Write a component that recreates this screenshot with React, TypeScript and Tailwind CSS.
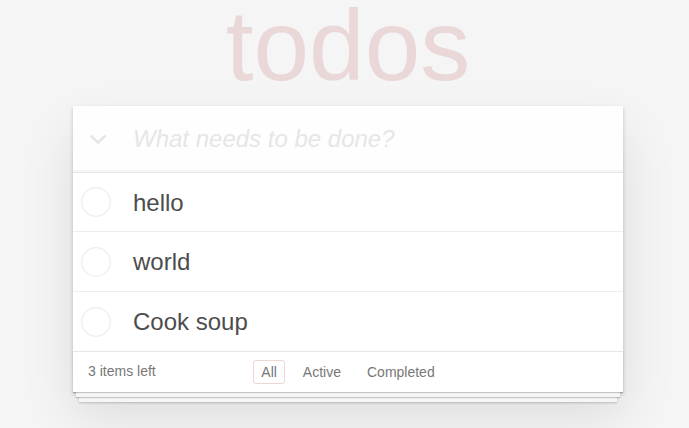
import { useState } from 'react'

type Todo = { id: number; title: string; completed: boolean }

const initialTodos: Todo[] = [
    { id: 1, title: 'hello', completed: false },
    { id: 2, title: 'world', completed: false },
    { id: 3, title: 'Cook soup', completed: false },
]

const filters = ['All', 'Active', 'Completed']

function App() {
    const [todos] = useState<Todo[]>(initialTodos)
    const [filter, setFilter] = useState('All')
    const left = todos.filter(t => !t.completed).length

    return (
        <main className="min-h-screen bg-[#f5f5f5] text-[#4d4d4d] font-['Liberation_Sans',Arial,sans-serif]">
            <div className="ml-[73px] w-[550px] pt-px">
                <h1 className="-mt-[5.6px] mb-[10.6px] text-center text-[100px] leading-[100px] font-thin text-[rgba(175,47,47,0.15)]">
                    todos
                </h1>

                <section className="bg-white shadow-[0_2px_4px_0_rgba(0,0,0,0.2),0_25px_50px_0_rgba(0,0,0,0.1)]">
                    <header className="flex h-[65.6px] items-center bg-[rgba(0,0,0,0.003)] shadow-[inset_0_-2px_1px_rgba(0,0,0,0.03)]">
                        <div className="flex w-[60px] items-center justify-start pl-[16px]">
                            <svg width="18" height="10" viewBox="0 0 18 10" className="mt-[1px]">
                                <polyline points="1.5,1.5 9,8.5 16.5,1.5" fill="none" stroke="#e6e6e6" strokeWidth="2.6" />
                            </svg>
                        </div>
                        <input
                            className="flex-1 bg-transparent pr-4 text-[24px] leading-[33.6px] outline-none placeholder:italic placeholder:text-[#e6e6e6]"
                            placeholder="What needs to be done?"
                        />
                    </header>

                    <ul className="border-t border-[#e6e6e6]">
                        {todos.map((todo, i) => (
                            <li
                                key={todo.id}
                                className={`flex items-center ${i === todos.length - 1 ? 'h-[58.8px]' : 'h-[59.8px] border-b border-[#ededed]'}`}
                            >
                                <div className="flex w-[60px] items-center pl-[8px]">
                                    <svg width="30" height="30" viewBox="0 0 30 30">
                                        <circle cx="15" cy="15" r="14.3" fill="none" stroke="#ededed" strokeWidth="1.2" />
                                    </svg>
                                </div>
                                <label className="pt-px text-[24px] leading-[33.6px] text-[#4d4d4d]">{todo.title}</label>
                            </li>
                        ))}
                    </ul>

                    <footer className="grid h-[41px] grid-cols-[1fr_auto_1fr] items-center border-t border-[#e6e6e6] px-[15px] text-[14px] text-[#777] shadow-[0_1px_1px_rgba(0,0,0,0.2),0_8px_0_-3px_#f6f6f6,0_9px_1px_-3px_rgba(0,0,0,0.2),0_16px_0_-6px_#f6f6f6,0_17px_2px_-6px_rgba(0,0,0,0.2)]">
                        <span>{left} items left</span>
                        <ul className="flex gap-[10px]">
                            {filters.map(f => (
                                <li key={f}>
                                    <button
                                        onClick={() => setFilter(f)}
                                        className={`rounded-[3px] border px-[7px] py-[3px] leading-[16px] ${filter === f ? 'border-[rgba(175,47,47,0.2)]' : 'border-transparent'}`}
                                    >
                                        {f}
                                    </button>
                                </li>
                            ))}
                        </ul>
                        <span />
                    </footer>
                </section>
            </div>
        </main>
    )
}

export default App
